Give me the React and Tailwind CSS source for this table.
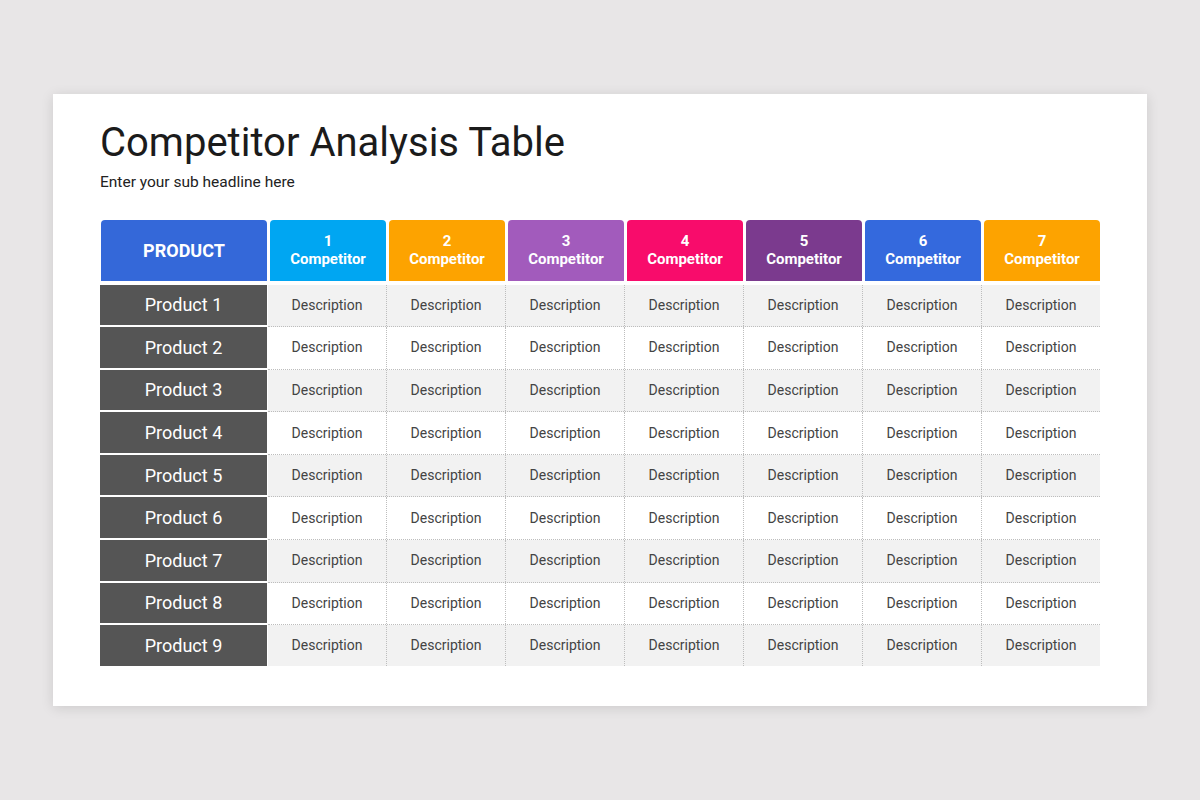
const competitors = [
  { n: 1, bg: "bg-[#00a6f2]" },
  { n: 2, bg: "bg-[#fda300]" },
  { n: 3, bg: "bg-[#a25bbc]" },
  { n: 4, bg: "bg-[#f80c6b]" },
  { n: 5, bg: "bg-[#7b3a8e]" },
  { n: 6, bg: "bg-[#3469dd]" },
  { n: 7, bg: "bg-[#fda300]" },
];

const products = [1, 2, 3, 4, 5, 6, 7, 8, 9];

export default function App() {
  return (
    <div className="min-h-screen w-full bg-[#e8e6e7] pt-[94px] pl-[53px]" style={{ fontFamily: "Roboto, 'Liberation Sans', sans-serif" }}>
      <div className="w-[1094px] h-[612px] bg-white shadow-[0_2px_12px_rgba(0,0,0,0.12)] pt-[29px] px-[47px]">
        <h1 className="text-[40px] leading-none text-[#1b1b1b]">Competitor Analysis Table</h1>
        <p className="mt-[12px] text-[15.5px] leading-none text-[#222]">Enter your sub headline here</p>

        <div className="mt-[29px] w-[1000px]">
          {/* header */}
          <div className="flex h-[61px]">
            <div className="ml-[1px] w-[166px] rounded-t-[4px] bg-[#3468d9] flex items-center justify-center text-white font-bold text-[18px]">
              PRODUCT
            </div>
            {competitors.map(c => (
              <div
                key={c.n}
                className={`ml-[3px] flex-1 rounded-t-[4px] ${c.bg} flex flex-col items-center justify-center text-white font-bold text-[15px] leading-[18px]`}
              >
                <span>{c.n}</span>
                <span>Competitor</span>
              </div>
            ))}
          </div>

          {/* body */}
          <div className="mt-[4px]">
            {products.map((p, i) => (
              <div key={p} className="flex h-[42.6px]">
                <div className={`w-[167px] bg-[#555555] flex items-center justify-center text-white text-[18px] ${i < products.length - 1 ? "border-b-2 border-white" : "h-[41px]"}`}>
                  Product {p}
                </div>
                <div className={`ml-[1px] flex flex-1 ${i % 2 === 0 ? "bg-[#f2f2f2]" : "bg-white"} ${i < products.length - 1 ? "border-b border-dotted border-[#bdbdbd]" : "h-[41px]"}`}>
                  {competitors.map((c, j) => (
                    <div
                      key={c.n}
                      className={`flex-1 flex items-center justify-center text-[14px] text-[#444] ${j < competitors.length - 1 ? "border-r border-dotted border-[#bdbdbd]" : ""}`}
                    >
                      Description
                    </div>
                  ))}
                </div>
              </div>
            ))}
          </div>
        </div>
      </div>
    </div>
  );
}
